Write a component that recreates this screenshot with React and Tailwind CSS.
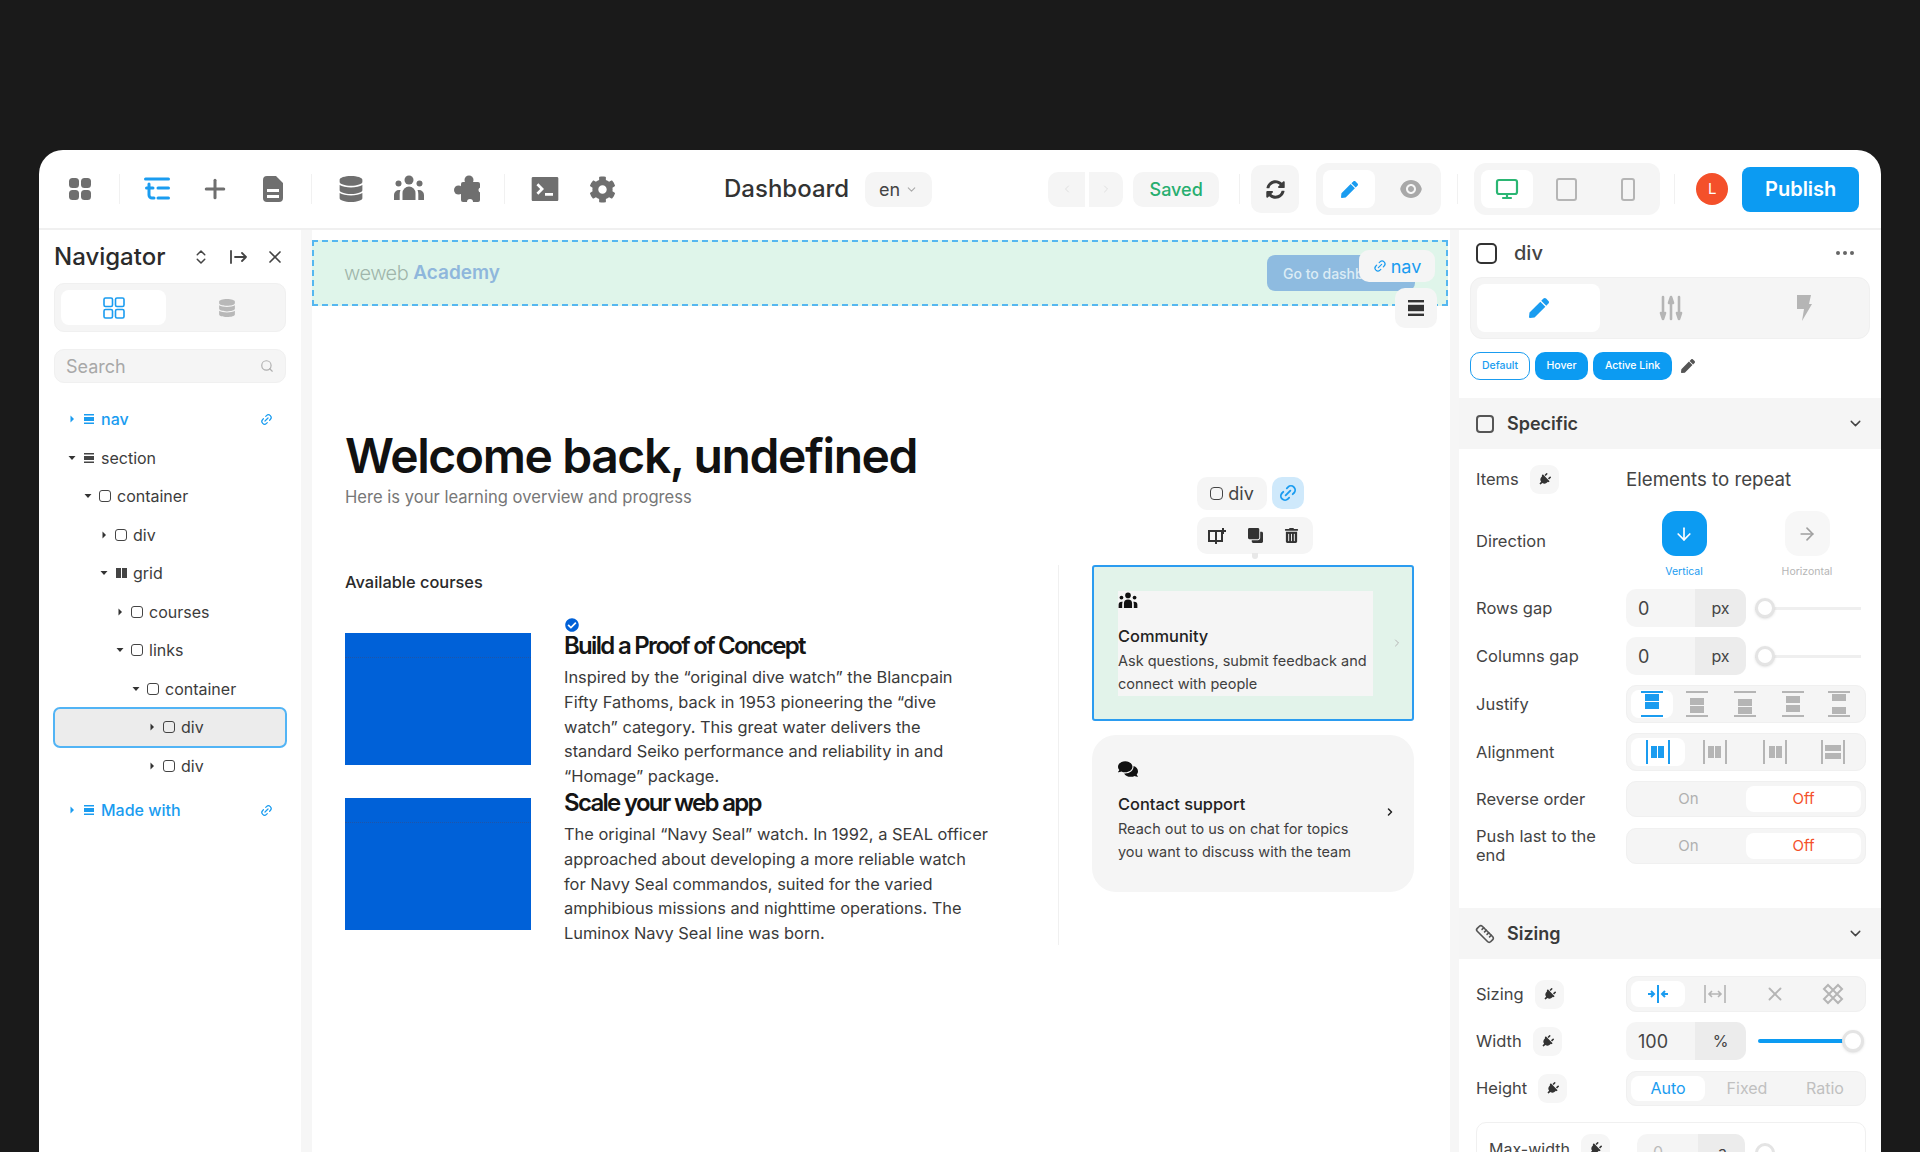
import { ChevronDown, ChevronRight, ChevronLeft, ChevronsUpDown, Plus, X, Search, Link2, Monitor, ArrowDown, ArrowRight, Ruler } from 'lucide-react'
import { FaDatabase, FaCog, FaPlug, FaTrashAlt, FaClone, FaComments, FaCheckCircle, FaPen, FaSyncAlt } from 'react-icons/fa'
import { RiTerminalBoxFill, RiEyeFill } from 'react-icons/ri'

const tree = [
  { name: 'nav', level: 'pl-[14px]', icon: 'bar', open: false, blue: true },
  { name: 'section', level: 'pl-[14px]', icon: 'bar', open: true },
  { name: 'container', level: 'pl-[30px]', icon: 'box', open: true },
  { name: 'div', level: 'pl-[46px]', icon: 'box', open: false },
  { name: 'grid', level: 'pl-[46px]', icon: 'grid', open: true },
  { name: 'courses', level: 'pl-[62px]', icon: 'box', open: false },
  { name: 'links', level: 'pl-[62px]', icon: 'box', open: true },
  { name: 'container', level: 'pl-[78px]', icon: 'box', open: true },
  { name: 'div', level: 'pl-[94px]', icon: 'box', open: false, selected: true },
  { name: 'div', level: 'pl-[94px]', icon: 'box', open: false },
]

function Sep() {
  return <div className="w-px h-[30px] bg-[#f1f1f1]" />
}

function GridIcon() {
  return (
    <svg width="24" height="24" viewBox="0 0 24 24" fill="#6f6f6f">
      <rect x="1" y="1" width="10" height="10" rx="3.5" />
      <rect x="13" y="1" width="10" height="10" rx="3.5" />
      <rect x="1" y="13" width="10" height="10" rx="3.5" />
      <rect x="13" y="13" width="10" height="10" rx="3.5" />
    </svg>
  )
}

function TreeIcon() {
  return (
    <svg width="26" height="24" viewBox="0 0 26 24" fill="none" stroke="#1a9cf0" strokeWidth="3" strokeLinecap="round">
      <path d="M1.500 2h23M5 7v11a3 3 0 0 0 3 3h2M2.500 11H9M14 11h10.500M14 21h10.500" />
    </svg>
  )
}

function FileIcon() {
  return (
    <svg width="20" height="26" viewBox="0 0 20 26" fill="#6f6f6f">
      <path fillRule="evenodd" d="M4 0h9l7 7v15a4 4 0 0 1-4 4H4a4 4 0 0 1-4-4V4a4 4 0 0 1 4-4zM4 13v3h12v-3zM4 19v3h12v-3z" />
    </svg>
  )
}

function TeamIcon({ size = 32, color = '#6f6f6f' }) {
  return (
    <svg width={size} height={size} viewBox="0 0 32 32" fill={color}>
      <circle cx="16" cy="7" r="4.500" />
      <circle cx="5.500" cy="10.500" r="3" />
      <circle cx="26.500" cy="10.500" r="3" />
      <path d="M9.500 27v-7a6.500 6.500 0 0 1 13 0v7z" />
      <path d="M1 27v-5a5 5 0 0 1 5-5h1.500a10 10 0 0 0-.8 4v6z" />
      <path d="M31 27v-5a5 5 0 0 0-5-5h-1.500a10 10 0 0 1 .8 4v6z" />
    </svg>
  )
}

function PuzzleIcon() {
  return (
    <svg width="28" height="28" viewBox="0 0 28 28" fill="#6f6f6f">
      <rect x="7" y="7" width="19" height="20" rx="2" />
      <circle cx="15" cy="5" r="4.500" />
      <circle cx="4.500" cy="15" r="4.500" />
      <circle cx="16" cy="27" r="3" fill="#fff" />
      <circle cx="27" cy="15" r="2.500" fill="#fff" />
    </svg>
  )
}

function SlidersIcon() {
  return (
    <svg width="24" height="26" viewBox="0 0 24 26" fill="none" stroke="#b5b5b5" strokeWidth="2.600" strokeLinecap="round" strokeLinejoin="round">
      <path d="M4 2v22M12 2v22M20 2v22M2 18l2 6 2-6M10 8l2-6 2 6M18 18l2 6 2-6" />
    </svg>
  )
}

function BoltIcon() {
  return (
    <svg width="16" height="26" viewBox="0 0 16 26" fill="#b5b5b5">
      <path d="M1 0h14l-2 9h3L6 26l2-12H1z" />
    </svg>
  )
}

function BarIcon({ color, size = 10 }) {
  return (
    <svg width={size} height={size} viewBox="0 0 10 10" fill={color}>
      <rect x="0" y="0" width="10" height="1.500" />
      <rect x="0" y="3" width="10" height="4" />
      <rect x="0" y="8.500" width="10" height="1.500" />
    </svg>
  )
}

function RowIcon({ icon, blue }) {
  if (icon === 'bar') return <BarIcon color={blue ? '#1a9cf0' : '#444'} />
  if (icon === 'grid') {
    return (
      <svg width="11" height="10" viewBox="0 0 11 10" fill="#444">
        <rect width="5" height="10" />
        <rect x="6" width="5" height="10" />
      </svg>
    )
  }
  return <span className="block size-[12px] rounded-[3px] border-[1.500px] border-[#444]" />
}

function Caret({ open, blue }) {
  const color = blue ? '#1a9cf0' : '#333'
  return (
    <svg width="8" height="8" viewBox="0 0 8 8" fill={color} className="shrink-0">
      {open ? <path d="M0.500 2h7L4 6z" /> : <path d="M2.500 0.500v7L6 4z" />}
    </svg>
  )
}

function TreeRow({ name, level, icon, open, blue, selected, link }) {
  return (
    <div
      className={`relative flex items-center h-[38.500px] ${level} ${selected ? 'bg-[#ececec] rounded-[6px] outline-2 -outline-offset-1 outline-[#52b4f5]' : ''}`}
    >
      <Caret open={open} blue={blue} />
      <span className="ml-[6px] w-[14px] flex justify-center"><RowIcon icon={icon} blue={blue} /></span>
      <span className={`ml-[5px] text-[16px] ${blue ? 'text-[#1a9cf0] font-medium' : 'text-[#3c3c3c]'}`}>{name}</span>
      {link && <Link2 size={13} strokeWidth={2.2} className="ml-auto mr-[13px] -rotate-45 text-[#1a9cf0]" />}
    </div>
  )
}

function Navigator() {
  return (
    <aside className="w-[262px] shrink-0 px-[15px] overflow-hidden">
      <div className="flex items-center h-[30px] mt-[12px]">
        <h2 className="text-[24px] font-medium text-[#2b2b2b]">Navigator</h2>
        <ChevronsUpDown size={18} className="ml-auto text-[#444]" />
        <svg width="20" height="16" viewBox="0 0 20 16" fill="none" stroke="#444" strokeWidth="1.800" strokeLinecap="round" strokeLinejoin="round" className="ml-[19px]">
          <path d="M2 2v12M6 8h11M13 4l4 4-4 4" />
        </svg>
        <X size={20} className="ml-[16px] mr-[1px] text-[#444]" />
      </div>
      <div className="flex mt-[11px] h-[49px] p-[6px] rounded-[10px] bg-[#f5f5f5] border border-[#f0f0f0] items-stretch">
        <div className="w-[105px] rounded-[8px] bg-white flex items-center justify-center">
          <svg width="22" height="22" viewBox="0 0 22 22" fill="none" stroke="#1a9cf0" strokeWidth="1.600">
            <rect x="1" y="1" width="8.500" height="8.500" rx="1.500" />
            <rect x="12.500" y="1" width="8.500" height="8.500" rx="1.500" />
            <rect x="1" y="12.500" width="8.500" height="8.500" rx="1.500" />
            <rect x="12.500" y="12.500" width="8.500" height="8.500" rx="1.500" />
          </svg>
        </div>
        <div className="flex-1 pl-[9px] flex items-center justify-center"><FaDatabase size={18} className="text-[#b8b8b8]" /></div>
      </div>
      <div className="flex items-center mt-[17px] h-[34px] px-[11px] rounded-[10px] bg-[#f5f5f5] border border-[#f0f0f0]">
        <span className="text-[18px] text-[#a8a8a8]">Search</span>
        <Search size={14} className="ml-auto text-[#b0b0b0]" />
      </div>
      <div className="mt-[17px]">
        {tree.map((row, i) => <TreeRow key={i} {...row} link={row.name === 'nav'} />)}
        <div className="mt-[6px]">
          <TreeRow name="Made with" level="pl-[14px]" icon="bar" blue link />
        </div>
      </div>
    </aside>
  )
}

function Toolbar() {
  return (
    <header className="flex items-center h-[80px] shrink-0 border-b-2 border-[#f0f0f0] pl-[29px] pr-[21px]">
      <div className="w-[24px] flex justify-center"><GridIcon /></div>
      <div className="ml-[27px]"><Sep /></div>
      <div className="ml-[24px]"><TreeIcon /></div>
      <Plus size={30} strokeWidth={2.400} className="ml-[30px] text-[#6f6f6f]" />
      <div className="ml-[33px]"><FileIcon /></div>
      <div className="ml-[28px]"><Sep /></div>
      <FaDatabase size={26} className="ml-[26px] text-[#6f6f6f]" />
      <div className="ml-[29px]"><TeamIcon /></div>
      <div className="ml-[29px]"><PuzzleIcon /></div>
      <div className="ml-[22px]"><Sep /></div>
      <RiTerminalBoxFill size={32} className="ml-[24px] text-[#6f6f6f]" />
      <FaCog size={27} className="ml-[28px] text-[#6f6f6f]" />
      <span className="ml-[108px] text-[24px] font-medium text-[#333]">Dashboard</span>
      <div className="ml-[16px] h-[35px] w-[67px] rounded-[10px] bg-[#f5f5f5] flex items-center justify-center gap-[5px] text-[18px] text-[#444]">
        en <ChevronDown size={13} className="text-[#aaa]" />
      </div>
      <div className="ml-[116px] h-[35px] w-[37px] rounded-l-[10px] bg-[#f5f5f5] flex items-center justify-center">
        <ChevronLeft size={12} className="text-[#e0e0e0]" />
      </div>
      <div className="ml-[4px] h-[35px] w-[34px] rounded-r-[10px] bg-[#f5f5f5] flex items-center justify-center">
        <ChevronRight size={12} className="text-[#e0e0e0]" />
      </div>
      <div className="ml-[10px] h-[35px] w-[86px] rounded-[10px] bg-[#f5f5f5] flex items-center justify-center text-[18px] font-medium text-[#27ae6f]">Saved</div>
      <div className="ml-[20px]"><Sep /></div>
      <div className="ml-[11px] size-[48px] rounded-[10px] bg-[#f5f5f5] flex items-center justify-center">
        <FaSyncAlt size={19} className="text-[#3c3c3c]" />
      </div>
      <div className="ml-[17px] w-[125px] h-[52px] p-[7px] rounded-[12px] bg-[#f5f5f5] flex">
        <div className="w-[52px] rounded-[8px] bg-white flex items-center justify-center"><FaPen size={17} className="text-[#1a9cf0]" /></div>
        <div className="flex-1 pl-[12px] flex items-center justify-center"><RiEyeFill size={24} className="text-[#a8a8a8]" /></div>
      </div>
      <div className="ml-[16px]"><Sep /></div>
      <div className="ml-[16px] w-[186px] h-[52px] p-[7px] rounded-[12px] bg-[#f5f5f5] flex items-stretch">
        <div className="w-[52px] rounded-[8px] bg-white flex items-center justify-center"><Monitor size={24} strokeWidth={2.200} className="text-[#2bb673]" /></div>
        <div className="w-[66px] flex items-center justify-center">
          <span className="block w-[21px] h-[23px] rounded-[3px] border-2 border-[#b5b5b5]" />
        </div>
        <div className="flex-1 pl-[4px] flex items-center justify-center">
          <span className="block w-[14px] h-[23px] rounded-[3px] border-2 border-[#b5b5b5]" />
        </div>
      </div>
      <div className="ml-[14px]"><Sep /></div>
      <div className="ml-[21px] size-[32px] rounded-full bg-[#f4502a] flex items-center justify-center text-[15px] text-white">L</div>
      <button className="ml-[14px] w-[117px] h-[45px] rounded-[8px] bg-[#0c9bf2] text-[20px] font-semibold text-white">Publish</button>
    </header>
  )
}

function Course({ first, title, lines }) {
  return (
    <div className={`flex gap-[33px] ${first ? '' : '-mt-[1px]'}`}>
      <div className={`w-[186px] h-[132px] shrink-0 bg-[#0061d8] ${first ? 'mt-[15px]' : 'mt-[10px]'}`}>
        <div className="mt-[24px] border-t border-dotted border-[#1f55a8]" />
      </div>
      <div>
        {first && <FaCheckCircle size={14} className="mb-[-1px] ml-px text-[#0061d8]" />}
        <h3 className="text-[24px] leading-[30px] font-semibold tracking-[-1.700px] text-[#151515]">{title}</h3>
        <div className="text-[16.400px] leading-[24.800px] text-[#3a3a3a] mt-[4px]">
          {lines.map(l => <p key={l} className="whitespace-nowrap">{l}</p>)}
        </div>
      </div>
    </div>
  )
}

function LinkCard({ title, lines, icon, chevron, className, inner }) {
  return (
    <div className={`flex items-center w-[322px] ${className}`}>
      <div className={`w-[255px] h-[105px] ${inner}`}>
        {icon}
        <div className="mt-[13px] mb-[1px] text-[16.400px] leading-[24px] font-medium text-[#222]">{title}</div>
        {lines.map(l => <p key={l} className="text-[14.500px] leading-[23px] text-[#3f3f3f] whitespace-nowrap">{l}</p>)}
      </div>
      {chevron}
    </div>
  )
}

function Canvas() {
  return (
    <main className="flex-1 min-w-0 overflow-hidden">
      <div className="relative mt-[10px] mr-[2px] h-[66px] bg-[#dff5ea] border-2 border-dashed border-[#55b7f0] flex items-center pl-[30px] pr-[31px]">
        <span className="text-[20px] font-light tracking-[-0.500px] text-[#9fb5ab]">weweb</span>
        <span className="ml-[5px] text-[19px] font-semibold text-[#8fb7dc]">Academy</span>
        <div className="ml-auto h-[36px] w-[148px] rounded-[8px] bg-[#8ebbe0] flex items-center pl-[16px] text-[14px] font-medium text-[#dcecf5] whitespace-nowrap overflow-hidden">Go to dashboard</div>
        <div className="absolute right-[11px] top-[8px] h-[32px] w-[76px] rounded-[10px] bg-[#f5f5f5] flex items-center justify-center gap-[4px] text-[18px] text-[#1a9cf0]">
          <Link2 size={14} className="-rotate-45" /> nav
        </div>
        <div className="absolute right-[9px] top-[46px] h-[40px] w-[42px] rounded-[10px] bg-[#f5f5f5] flex items-center justify-center">
          <BarIcon color="#333" size={16} />
        </div>
      </div>
      <div className="pl-[33px] pt-[122px]">
        <h1 className="text-[48px] leading-[56px] font-semibold tracking-[-1.400px] text-[#111] whitespace-nowrap">Welcome back, undefined</h1>
        <p className="mt-px text-[16.600px] leading-[24px] text-[#777]">Here is your learning overview and progress</p>
        <div className="flex mt-[56px]">
          <div className="w-[714px] h-[380px] pt-[5px] border-r border-[#f0f0f0]">
            <div className="text-[16.400px] leading-[24px] font-medium text-[#2a2a2a]">Available courses</div>
            <div className="mt-[24px]">
              <Course
                first
                title="Build a Proof of Concept"
                lines={[
                  'Inspired by the “original dive watch” the Blancpain',
                  'Fifty Fathoms, back in 1953 pioneering the “dive',
                  'watch” category. This great water delivers the',
                  'standard Seiko performance and reliability in and',
                  '“Homage” package.',
                ]}
              />
              <Course
                title="Scale your web app"
                lines={[
                  'The original “Navy Seal” watch. In 1992, a SEAL officer',
                  'approached about developing a more reliable watch',
                  'for Navy Seal commandos, suited for the varied',
                  'amphibious missions and nighttime operations. The',
                  'Luminox Navy Seal line was born.',
                ]}
              />
            </div>
          </div>
          <div className="relative ml-[33px] flex flex-col gap-[14px]">
            <div className="absolute left-[105px] top-[-88px] flex gap-[5px]">
              <div className="h-[33px] w-[70px] rounded-[10px] bg-[#f5f5f5] flex items-center justify-center gap-[5px] text-[18px] text-[#444]">
                <span className="size-[13px] rounded-[4px] border-[1.500px] border-[#444]" /> div
              </div>
              <div className="size-[32px] rounded-[10px] bg-[#cfe9fb] flex items-center justify-center">
                <Link2 size={20} strokeWidth={2.200} className="-rotate-45 text-[#1a9cf0]" />
              </div>
            </div>
            <div className="absolute left-[105px] top-[-48px] h-[37px] w-[116px] rounded-[10px] bg-[#f5f5f5] flex items-center justify-between pl-[10px] pr-[14px]">
              <svg width="20" height="18" viewBox="0 0 20 18" fill="none" stroke="#333" strokeWidth="2">
                <path d="M9 4H2v10h7zM9 4h6v10H9M9 14v3M16 1v6M13 4h6" />
              </svg>
              <FaClone size={15} className="text-[#333] -scale-x-100" />
              <FaTrashAlt size={15} className="text-[#333]" />
              <span className="absolute left-[55px] bottom-[-5px] size-[6px] rounded-b-full bg-[#e8e8e8]" />
            </div>
            <LinkCard
              title="Community"
              lines={['Ask questions, submit feedback and', 'connect with people']}
              className="h-[156px] pl-[24px] bg-[#e2f3ea] border-2 border-[#2b9cf0] rounded-[3px]"
              inner="bg-[#f5f5f5]"
              icon={<TeamIcon size={20} color="#111" />}
              chevron={<ChevronRight size={12} className="ml-[18px] text-[#b5b5b5]" />}
            />
            <LinkCard
              title="Contact support"
              lines={['Reach out to us on chat for topics', 'you want to discuss with the team']}
              className="h-[157px] pl-[26px] bg-[#f5f5f5] rounded-[24px]"
              icon={<FaComments size={20} className="-mt-[2px] text-[#111]" />}
              chevron={<ChevronRight size={12} strokeWidth={3} className="ml-[11px] -mt-[3px] text-[#222]" />}
            />
          </div>
        </div>
      </div>
    </main>
  )
}

function Plug({ className = '' }) {
  return (
    <span className={`size-[29px] rounded-[9px] bg-[#f6f6f6] flex items-center justify-center shrink-0 ${className}`}>
      <FaPlug size={13} className="rotate-45 text-[#333]" />
    </span>
  )
}

function Row({ label, children, className = 'h-[38px]', plug }) {
  return (
    <div className={`flex items-center ${className}`}>
      <div className="w-[150px] flex items-center gap-[11px] text-[16.500px] leading-[19px] text-[#444]">
        <span className="whitespace-pre-line">{label}</span>
        {plug && <Plug />}
      </div>
      {children}
    </div>
  )
}

function UnitInput({ value, unit }) {
  return (
    <div className="flex w-[120px] h-[38px] rounded-[10px] overflow-hidden bg-[#f5f5f5] text-[18px] text-[#444]">
      <span className="flex-1 flex items-center pl-[12px]">{value}</span>
      <span className="w-[51px] bg-[#ececec] flex items-center justify-center text-[16px]">{unit}</span>
    </div>
  )
}

function EmptySlider() {
  return (
    <div className="relative ml-[9px] w-[106px] h-[20px] flex items-center">
      <div className="w-full h-[3px] bg-[#efefef]" />
      <span className="absolute left-0 size-[20px] rounded-full bg-white border-[3px] border-[#e4e4e4] shadow-sm" />
    </div>
  )
}

function Group({ children, className = 'h-[38px]' }) {
  return <div className={`w-[240px] p-[4px] rounded-[10px] bg-[#f5f5f5] border border-[#f0f0f0] flex items-stretch ${className}`}>{children}</div>
}

function StackIcon({ color, gaps }) {
  return (
    <svg width="22" height="26" viewBox="0 0 22 26" fill={color}>
      <rect x="0" y="0" width="22" height="2" />
      <rect x="4" y={gaps[0]} width="14" height="7" />
      <rect x="4" y={gaps[1]} width="14" height="7" />
      <rect x="0" y="24" width="22" height="2" />
    </svg>
  )
}

function AlignIcon({ color, mode }) {
  return (
    <svg width="24" height="24" viewBox="0 0 24 24" fill={color}>
      <rect x="0" y="0" width="2" height="24" />
      <rect x="22" y="0" width="2" height="24" />
      {mode === 'stretch' ? (
        <>
          <rect x="4" y="5" width="16" height="6" />
          <rect x="4" y="13" width="16" height="6" />
        </>
      ) : (
        <>
          <rect x={mode} y="6" width="6" height="12" />
          <rect x={mode + 7} y="6" width="6" height="12" />
        </>
      )}
    </svg>
  )
}

function OnOff() {
  return (
    <Group className="h-[36px]">
      <span className="flex-1 flex items-center justify-center text-[15px] text-[#b0b0b0]">On</span>
      <span className="w-[115px] rounded-[8px] bg-white flex items-center justify-center text-[15px] text-[#f4502a]">Off</span>
    </Group>
  )
}

function SectionHead({ icon, title, className }) {
  return (
    <div className={`flex items-center h-[51px] bg-[#f5f5f5] pl-[16px] pr-[17px] ${className}`}>
      <span className="w-[20px] flex justify-center">{icon}</span>
      <span className="ml-[12px] text-[18px] font-semibold text-[#3a3a3a]">{title}</span>
      <ChevronDown size={17} className="ml-auto text-[#444]" />
    </div>
  )
}

function Inspector() {
  return (
    <aside className="w-[422px] shrink-0 overflow-hidden">
      <div className="flex items-center h-[46px] pl-[17px] pr-[27px]">
        <span className="size-[21px] rounded-[5px] border-2 border-[#333]" />
        <span className="ml-[17px] text-[20px] font-medium text-[#444]">div</span>
        <span className="ml-auto flex gap-[3px]">
          <i className="size-[4px] rounded-full bg-[#666]" />
          <i className="size-[4px] rounded-full bg-[#666]" />
          <i className="size-[4px] rounded-full bg-[#666]" />
        </span>
      </div>
      <div className="mx-[11px] h-[62px] mt-[1px] p-[6px] rounded-[12px] bg-[#f5f5f5] border border-[#f0f0f0] flex items-stretch">
        <div className="w-[123px] rounded-[8px] bg-white flex items-center justify-center"><FaPen size={20} className="text-[#1a9cf0]" /></div>
        <div className="w-[141px] flex items-center justify-center"><SlidersIcon /></div>
        <div className="flex-1 pl-[3px] flex items-center justify-center"><BoltIcon /></div>
      </div>
      <div className="flex items-center gap-[5px] mt-[13px] ml-[11px] text-[10.500px] font-medium">
        <span className="h-[28px] w-[60px] rounded-[10px] border border-[#1a9cf0] text-[#1a9cf0] flex items-center justify-center">Default</span>
        <span className="h-[28px] w-[53px] rounded-[10px] bg-[#0c9bf2] text-white flex items-center justify-center">Hover</span>
        <span className="h-[28px] w-[79px] rounded-[10px] bg-[#0c9bf2] text-white flex items-center justify-center">Active Link</span>
        <FaPen size={14} className="ml-[4px] text-[#555]" />
      </div>
      <SectionHead
        className="mt-[18px]"
        title="Specific"
        icon={<span className="size-[18px] rounded-[4px] border-2 border-[#555]" />}
      />
      <div className="pl-[17px]">
        <Row label="Items" plug className="h-[29px] mt-[16px]">
          <span className="mt-[2px] text-[18.700px] text-[#444]">Elements to repeat</span>
        </Row>
        <div className="flex mt-[17px] h-[69px]">
          <div className="w-[150px] pt-[18px] text-[16.500px] text-[#444]">Direction</div>
          <div className="w-[116px] flex flex-col items-center">
            <span className="size-[45px] rounded-[14px] bg-[#0c9bf2] flex items-center justify-center"><ArrowDown size={20} className="text-white" /></span>
            <span className="mt-[8px] text-[10.500px] text-[#1a9cf0]">Vertical</span>
          </div>
          <div className="ml-[7px] w-[116px] flex flex-col items-center">
            <span className="size-[45px] rounded-[14px] bg-[#f7f7f7] flex items-center justify-center"><ArrowRight size={20} className="text-[#a0a0a0]" /></span>
            <span className="mt-[8px] text-[10.500px] text-[#b5b5b5]">Horizontal</span>
          </div>
        </div>
        <Row label="Rows gap" className="h-[38px] mt-[9px]">
          <UnitInput value="0" unit="px" />
          <EmptySlider />
        </Row>
        <Row label="Columns gap" className="h-[38px] mt-[10px]">
          <UnitInput value="0" unit="px" />
          <EmptySlider />
        </Row>
        <Row label="Justify" className="h-[38px] mt-[10px]">
          <Group>
            <span className="w-[42px] rounded-[8px] bg-white flex items-center justify-center"><StackIcon color="#1a9cf0" gaps={[3, 11]} /></span>
            <span className="w-[48px] flex items-center justify-center"><StackIcon color="#b5b5b5" gaps={[7, 15]} /></span>
            <span className="w-[48px] flex items-center justify-center"><StackIcon color="#b5b5b5" gaps={[8, 16]} /></span>
            <span className="w-[48px] flex items-center justify-center"><StackIcon color="#b5b5b5" gaps={[5, 14]} /></span>
            <span className="flex-1 flex items-center justify-center"><StackIcon color="#b5b5b5" gaps={[3, 16]} /></span>
          </Group>
        </Row>
        <Row label="Alignment" className="h-[38px] mt-[10px]">
          <Group>
            <span className="w-[54px] rounded-[8px] bg-white flex items-center justify-center"><AlignIcon color="#1a9cf0" mode={5} /></span>
            <span className="w-[60px] flex items-center justify-center"><AlignIcon color="#b5b5b5" mode={5} /></span>
            <span className="w-[60px] flex items-center justify-center"><AlignIcon color="#b5b5b5" mode={6} /></span>
            <span className="flex-1 flex items-center justify-center"><AlignIcon color="#b5b5b5" mode="stretch" /></span>
          </Group>
        </Row>
        <Row label="Reverse order" className="h-[36px] mt-[10px]"><OnOff /></Row>
        <Row label={'Push last to the\nend'} className="h-[36px] mt-[11px]"><OnOff /></Row>
      </div>
      <SectionHead
        className="mt-[44px]"
        title="Sizing"
        icon={<Ruler size={20} className="text-[#555]" />}
      />
      <div className="pl-[17px]">
        <Row label="Sizing" plug className="h-[36px] mt-[17px]">
          <Group className="h-[36px]">
            <span className="w-[54px] rounded-[8px] bg-white flex items-center justify-center">
              <svg width="22" height="18" viewBox="0 0 22 18" fill="none" stroke="#1a9cf0" strokeWidth="2"><path d="M11 0v18M1 9h6M4 6l3 3-3 3M21 9h-6M18 6l-3 3 3 3" /></svg>
            </span>
            <span className="w-[60px] flex items-center justify-center">
              <svg width="22" height="18" viewBox="0 0 22 18" fill="none" stroke="#b5b5b5" strokeWidth="1.600"><path d="M1 0v18M21 0v18M5 9h12M8 6L5 9l3 3M14 6l3 3-3 3" /></svg>
            </span>
            <span className="w-[60px] flex items-center justify-center"><X size={22} className="text-[#b5b5b5]" /></span>
            <span className="flex-1 flex items-center justify-center">
              <svg width="22" height="22" viewBox="0 0 22 22" fill="none" stroke="#b5b5b5" strokeWidth="2"><path d="M2 6l4-4 14 14-4 4zM20 6l-4-4L2 16l4 4z" /></svg>
            </span>
          </Group>
        </Row>
        <Row label="Width" plug className="h-[38px] mt-[10px]">
          <UnitInput value="100" unit="%" />
          <div className="relative ml-[12px] w-[106px] h-[22px] flex items-center">
            <div className="w-[90px] h-[4px] rounded-full bg-[#0c9bf2]" />
            <span className="absolute right-0 size-[22px] rounded-full bg-white border-[3px] border-[#e4e4e4] shadow-sm" />
          </div>
        </Row>
        <Row label="Height" plug className="h-[34px] mt-[11px]">
          <Group className="h-[35px]">
            <span className="w-[74px] rounded-[8px] bg-white flex items-center justify-center text-[16px] text-[#1a9cf0]">Auto</span>
            <span className="w-[84px] flex items-center justify-center text-[16px] text-[#c0c0c0]">Fixed</span>
            <span className="flex-1 flex items-center justify-center text-[16px] text-[#c0c0c0]">Ratio</span>
          </Group>
        </Row>
        <div className="mt-[17px] w-[390px] h-[60px] rounded-[10px] border border-[#f0f0f0] pl-[12px] pt-[11px] flex items-start">
          <div className="w-[148px] flex items-center gap-[11px] text-[16px] text-[#444]">Max-width <Plug /></div>
          <div className="flex w-[108px] h-[38px] rounded-[10px] overflow-hidden bg-[#f5f5f5] text-[16px] text-[#bbb]">
            <span className="flex-1 pl-[16px] pt-[6px]">0</span>
            <span className="w-[47px] bg-[#ececec] pl-[20px] pt-[6px] text-[#444]">a</span>
          </div>
          <div className="relative ml-[10px] mt-[9px] w-[96px] h-[20px] flex items-center">
            <div className="w-full h-[3px] bg-[#efefef]" />
            <span className="absolute left-0 size-[20px] rounded-full bg-white border-[3px] border-[#e4e4e4]" />
          </div>
        </div>
      </div>
    </aside>
  )
}

export default function App() {
  return (
    <div className="h-[1152px] overflow-hidden bg-[#1a1a1a] pt-[150px] px-[39px] font-[family-name:Inter,sans-serif]">
      <div className="h-[1002px] flex flex-col rounded-t-[24px] bg-white overflow-hidden">
        <Toolbar />
        <div className="flex flex-1 min-h-0">
          <Navigator />
          <div className="w-[11px] shrink-0 bg-[#f6f6f6]" />
          <Canvas />
          <div className="w-[9px] shrink-0 bg-[#f6f6f6]" />
          <Inspector />
        </div>
      </div>
    </div>
  )
}
